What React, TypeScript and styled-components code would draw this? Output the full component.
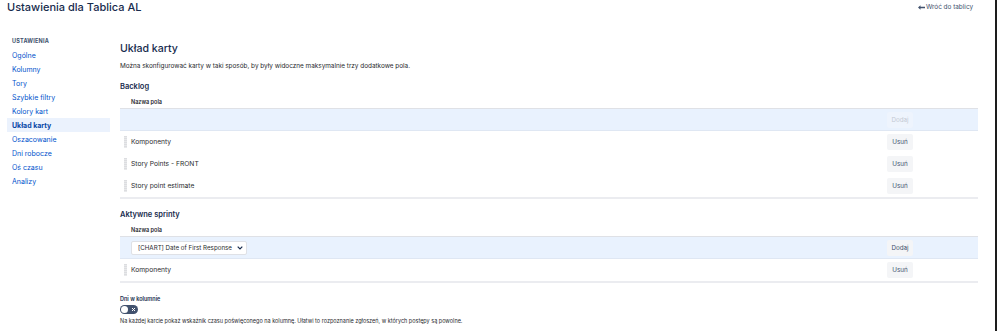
import React from "react";
import styled, { createGlobalStyle } from "styled-components";

const Global = createGlobalStyle`
  html, body { margin: 0; padding: 0; background: #fff; }
  body { font-family: Inter, "Noto Sans", sans-serif; color: #172b4d; }
  * { box-sizing: border-box; }
`;

const Page = styled.div`
  width: 998px;
  height: 331px;
  position: relative;
  overflow: hidden;
  background: #fff;
`;

const EdgeLine = styled.div`
  position: absolute;
  top: 0;
  bottom: 0;
  left: 995px;
  width: 2px;
  background: #1d1d1d;
`;

const Header = styled.header`
  display: flex;
  justify-content: space-between;
  align-items: flex-start;
  height: 32px;
  padding: 0 25px 0 7px;
`;

const Title = styled.h1`
  margin: 0;
  font-size: 11px;
  font-weight: 500;
  line-height: 15px;
  color: #172b4d;
`;

const BackLink = styled.a`
  display: flex;
  align-items: center;
  gap: 1px;
  margin-top: 2px;
  font-size: 6.4px;
  line-height: 10px;
  color: #42526e;
  text-decoration: none;
  white-space: nowrap;
`;

const Body = styled.div`
  display: grid;
  grid-template-columns: 103px 1fr;
  column-gap: 10px;
  padding: 0 20px 0 7px;
`;

const Sidebar = styled.nav`
  display: flex;
  flex-direction: column;
  padding-top: 5px;
`;

const SideHeading = styled.div`
  font-size: 5.5px;
  font-weight: 700;
  letter-spacing: 0.2px;
  color: #42526e;
  line-height: 8px;
  padding: 0 5px;
  margin-bottom: 3px;
`;

const NavItem = styled.a<{ $active?: boolean }>`
  display: flex;
  align-items: center;
  height: 14px;
  padding: 0 5px;
  font-size: 7px;
  font-weight: ${(p) => (p.$active ? 700 : 400)};
  color: ${(p) => (p.$active ? "#0747a6" : "#0052cc")};
  background: ${(p) => (p.$active ? "#ebf2fd" : "transparent")};
  text-decoration: none;
`;

const Main = styled.main`
  display: flex;
  flex-direction: column;
`;

const H2 = styled.h2`
  margin: 10px 0 0;
  font-size: 10.6px;
  font-weight: 500;
  line-height: 14px;
  color: #172b4d;
`;

const Desc = styled.p`
  margin: 6px 0 0;
  font-size: 6.4px;
  line-height: 9px;
  color: #292a2e;
`;

const H3 = styled.h3<{ $top: number }>`
  margin: ${(p) => p.$top}px 0 3px;
  font-size: 7.5px;
  font-weight: 600;
  line-height: 10px;
  color: #172b4d;
`;

const Table = styled.div`
  display: flex;
  flex-direction: column;
  border-bottom: 2px solid #ebecf0;
`;

const HeadRow = styled.div`
  height: 14px;
  display: flex;
  align-items: center;
  padding-left: 11px;
  font-size: 5.5px;
  font-weight: 600;
  color: #292a2e;
  border-bottom: 1px solid #dfe1e6;
`;

const Row = styled.div<{ $highlight?: boolean }>`
  height: 22px;
  display: flex;
  align-items: center;
  padding-left: 4px;
  padding-right: 65px;
  background: ${(p) => (p.$highlight ? "#e9f2fe" : "transparent")};
  border-bottom: ${(p) => (p.$highlight ? "1px solid #dfe7f3" : "none")};
`;

const Handle = styled.span`
  width: 3px;
  height: 12px;
  margin-right: 4px;
  background: repeating-linear-gradient(
    to bottom,
    #dcdde0 0 1px,
    #e8e9eb 1px 2px
  );
`;

const CellText = styled.span`
  flex: 1;
  font-size: 6.7px;
  color: #292a2e;
`;

const Spacer = styled.span`
  flex: 1;
`;

const Btn = styled.button<{ $disabled?: boolean }>`
  width: 26px;
  height: 16px;
  padding: 0;
  border: none;
  border-radius: 2px;
  font-family: inherit;
  font-size: 6.3px;
  color: ${(p) => (p.$disabled ? "#c4cad4" : "#42526e")};
  background: ${(p) => (p.$disabled ? "#eef4fd" : "#f4f5f7")};
`;

const SelectBox = styled.div`
  margin-left: 7px;
  width: 116px;
  flex-shrink: 0;
  height: 14px;
  display: flex;
  align-items: center;
  justify-content: space-between;
  padding: 0 3px 0 6px;
  background: #fff;
  border: 1px solid #dfe1e6;
  border-radius: 2px;
  font-size: 6.2px;
  white-space: nowrap;
  color: #292a2e;
`;

const ToggleLabel = styled.div`
  margin-top: 12px;
  font-size: 5.5px;
  font-weight: 600;
  line-height: 8px;
`;

const Toggle = styled.div`
  margin-top: 2px;
  width: 18px;
  height: 9px;
  border-radius: 5px;
  background: #42526e;
  display: flex;
  align-items: center;
  justify-content: space-between;
  padding: 0 2px 0 1px;
`;

const Knob = styled.span`
  width: 7px;
  height: 7px;
  border-radius: 50%;
  background: #fff;
`;

const Help = styled.p`
  margin: 3px 0 0;
  font-size: 5.5px;
  line-height: 8px;
  color: #292a2e;
`;

const navItems = [
  "Ogólne",
  "Kolumny",
  "Tory",
  "Szybkie filtry",
  "Kolory kart",
  "Układ karty",
  "Oszacowanie",
  "Dni robocze",
  "Oś czasu",
  "Analizy",
];

const backlog = ["Komponenty", "Story Points - FRONT", "Story point estimate"];

export default function App() {
  return (
    <Page>
      <Global />
      <Header>
        <Title>Ustawienia dla Tablica AL</Title>
        <BackLink href="#">
          <svg width="7" height="5" viewBox="0 0 7 5">
            <path d="M0 2.5 L2.5 0.3 V1.8 H7 V3.2 H2.5 V4.7 Z" fill="#42526e" />
          </svg>
          Wróć do tablicy
        </BackLink>
      </Header>
      <Body>
        <Sidebar>
          <SideHeading>USTAWIENIA</SideHeading>
          {navItems.map((n) => (
            <NavItem key={n} href="#" $active={n === "Układ karty"}>
              {n}
            </NavItem>
          ))}
        </Sidebar>
        <Main>
          <H2>Układ karty</H2>
          <Desc>
            Można skonfigurować karty w taki sposób, by były widoczne maksymalnie trzy
            dodatkowe pola.
          </Desc>
          <H3 $top={11}>Backlog</H3>
          <Table>
            <HeadRow>Nazwa pola</HeadRow>
            <Row $highlight>
              <Spacer />
              <Btn $disabled>Dodaj</Btn>
            </Row>
            {backlog.map((b) => (
              <Row key={b}>
                <Handle />
                <CellText>{b}</CellText>
                <Btn>Usuń</Btn>
              </Row>
            ))}
          </Table>
          <H3 $top={11}>Aktywne sprinty</H3>
          <Table>
            <HeadRow>Nazwa pola</HeadRow>
            <Row $highlight>
              <SelectBox>
                [CHART] Date of First Response
                <svg width="6" height="4" viewBox="0 0 6 4">
                  <path d="M0.7 0.7 L3 3 L5.3 0.7" stroke="#172b4d" strokeWidth="1.2" fill="none" />
                </svg>
              </SelectBox>
              <Spacer />
              <Btn>Dodaj</Btn>
            </Row>
            <Row>
              <Handle />
              <CellText>Komponenty</CellText>
              <Btn>Usuń</Btn>
            </Row>
          </Table>
          <ToggleLabel>Dni w kolumnie</ToggleLabel>
          <Toggle>
            <Knob />
            <svg width="5" height="5" viewBox="0 0 5 5">
              <path d="M1 1 L4 4 M4 1 L1 4" stroke="#fff" strokeWidth="1" />
            </svg>
          </Toggle>
          <Help>
            Na każdej karcie pokaż wskaźnik czasu poświęconego na kolumnę. Ułatwi to
            rozpoznanie zgłoszeń, w których postępy są powolne.
          </Help>
        </Main>
      </Body>
      <EdgeLine />
    </Page>
  );
}
